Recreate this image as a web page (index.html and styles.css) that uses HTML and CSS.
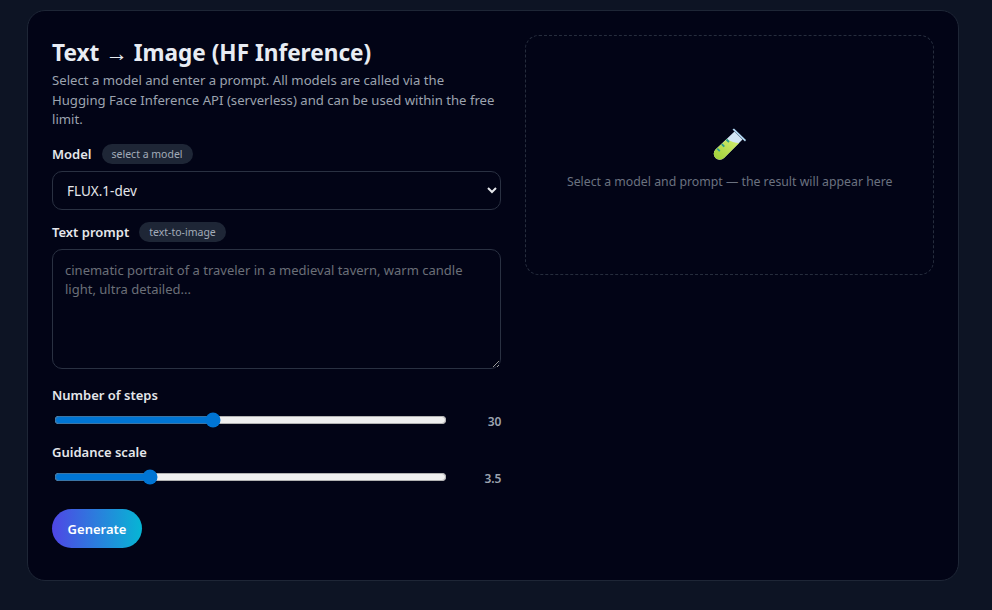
FILE: index.html
```html
<!DOCTYPE html>
<html lang="en">
<head>
<meta charset="utf-8">
<title>Text → Image (HF Inference)</title>
<link rel="stylesheet" href="styles.css">
</head>
<body>
<main class="card">
  <section class="controls">
    <h1 class="title">Text → Image (HF Inference)</h1>
    <p class="intro">Select a model and enter a prompt. All models are called via the Hugging Face Inference API (serverless) and can be used within the free limit.</p>
    <div class="label-row label-row-model">
      <label class="label" for="model">Model</label>
      <span class="pill">select a model</span>
    </div>
    <select class="select" id="model">
      <option>FLUX.1-dev</option>
    </select>
    <div class="label-row label-row-prompt">
      <label class="label" for="prompt">Text prompt</label>
      <span class="pill">text-to-image</span>
    </div>
    <textarea class="prompt" id="prompt" placeholder="cinematic portrait of a traveler in a medieval tavern, warm candle light, ultra detailed..."></textarea>
    <label class="label slider-label slider-label-first" for="steps">Number of steps</label>
    <div class="slider-row">
      <input class="slider" id="steps" type="range" min="10" max="60" value="30">
      <span class="slider-value">30</span>
    </div>
    <label class="label slider-label" for="guidance">Guidance scale</label>
    <div class="slider-row">
      <input class="slider" id="guidance" type="range" min="0" max="15" step="0.5" value="3.5">
      <span class="slider-value">3.5</span>
    </div>
    <button class="generate" type="button">Generate</button>
  </section>
  <section class="preview">
    <svg class="flask" viewBox="0 0 34 34" width="34" height="34" aria-hidden="true">
      <defs>
        <linearGradient id="liquid" x1="0" y1="1" x2="1" y2="0">
          <stop offset="0" stop-color="#9ccf35"/>
          <stop offset="1" stop-color="#d6ee72"/>
        </linearGradient>
      </defs>
      <path d="M21.5 3.5 L29.5 11.5 L11 30 A6 6 0 0 1 2.5 21.5 Z" fill="#d3e6f5"/>
      <path d="M14 11 Q20 15 26 15 L11 30 A6 6 0 0 1 2.5 21.5 Z" fill="url(#liquid)"/>
      <path d="M19.5 1.5 L21 0.5 L33 12 L32 13.5 Z" fill="#b4daf5"/>
      <path d="M13.5 11.5 L16 14 M8.8 16.2 L11.3 18.7 M4.3 20.7 L6.8 23.2" stroke="#2a9d8f" stroke-width="1.8" fill="none"/>
    </svg>
    <p class="preview-text">Select a model and prompt — the result will appear here</p>
  </section>
</main>
</body>
</html>
```
FILE: styles.css
```css
* { box-sizing: border-box; }

html, body { height: 100%; }

body {
  margin: 0;
  padding: 10px 33px 29px 27px;
  background: #0d1424;
  color: #e5e7eb;
  font-family: "Noto Sans", "Open Sans", sans-serif;
}

.card {
  display: grid;
  grid-template-columns: 1.1fr 1fr;
  gap: 24px;
  align-items: start;
  height: 571px;
  padding: 24px;
  background: #020416;
  border: 1px solid #1e2636;
  border-radius: 18px;
}

.title {
  margin: 0;
  font-size: 22.6px;
  line-height: 35px;
  font-weight: 700;
  color: #e8ecf3;
}

.intro {
  max-width: 445px;
  margin: 1px 0 0;
  font-size: 13.15px;
  line-height: 19.5px;
  color: #9ca3af;
}

.label-row {
  display: flex;
  align-items: center;
  gap: 10px;
  height: 21px;
}

.label-row-model { margin-top: 13.5px; margin-bottom: 7px; }
.label-row-prompt { margin-top: 11px; margin-bottom: 7px; }

.label {
  font-size: 13px;
  font-weight: 600;
  color: #e5e7eb;
}

.pill {
  padding: 2px 10px;
  border-radius: 999px;
  background: #1e2636;
  color: #a3acb9;
  font-size: 10.5px;
  line-height: 16px;
}

.select {
  display: block;
  width: 100%;
  height: 39px;
  padding: 0 10px;
  background: #020416;
  border: 1px solid #2a3142;
  border-radius: 10px;
  color: #e5e7eb;
  color-scheme: dark;
  font-family: inherit;
  font-size: 13.5px;
}

.prompt {
  display: block;
  width: 100%;
  height: 120px;
  padding: 11px 12px;
  background: #020416;
  border: 1px solid #2a3142;
  border-radius: 10px;
  color: #e5e7eb;
  color-scheme: dark;
  font-family: inherit;
  font-size: 13px;
  line-height: 19px;
  resize: vertical;
}

.prompt::placeholder { color: #6b6f78; opacity: 1; }

.slider-label {
  display: block;
  line-height: 18px;
  margin-top: 10px;
}

.slider-label-first { margin-top: 17px; }

.slider-row {
  display: flex;
  align-items: center;
  justify-content: space-between;
  height: 29px;
  padding-top: 3px;
}

.slider {
  width: 393px;
  margin: 0 2px;
  accent-color: #0075d4;
}

.slider-value {
  padding-top: 3px;
  font-size: 12px;
  font-weight: 600;
  color: #9ca3af;
}

.generate {
  display: block;
  width: 90px;
  height: 39px;
  margin-top: 19px;
  padding: 0;
  border: 0;
  border-radius: 999px;
  background: linear-gradient(90deg, #4f46e5, #06b6d4);
  color: #fff;
  font-family: inherit;
  font-size: 13px;
  font-weight: 600;
}

.preview {
  display: flex;
  flex-direction: column;
  align-items: center;
  justify-content: center;
  height: 240px;
  padding-top: 6px;
  border: 1px dashed #262d3d;
  border-radius: 14px;
}

.flask { display: block; margin-top: 2px; }

.preview-text {
  margin: 11px 0 0;
  font-size: 12.3px;
  line-height: 18px;
  color: #6b7280;
}
```
